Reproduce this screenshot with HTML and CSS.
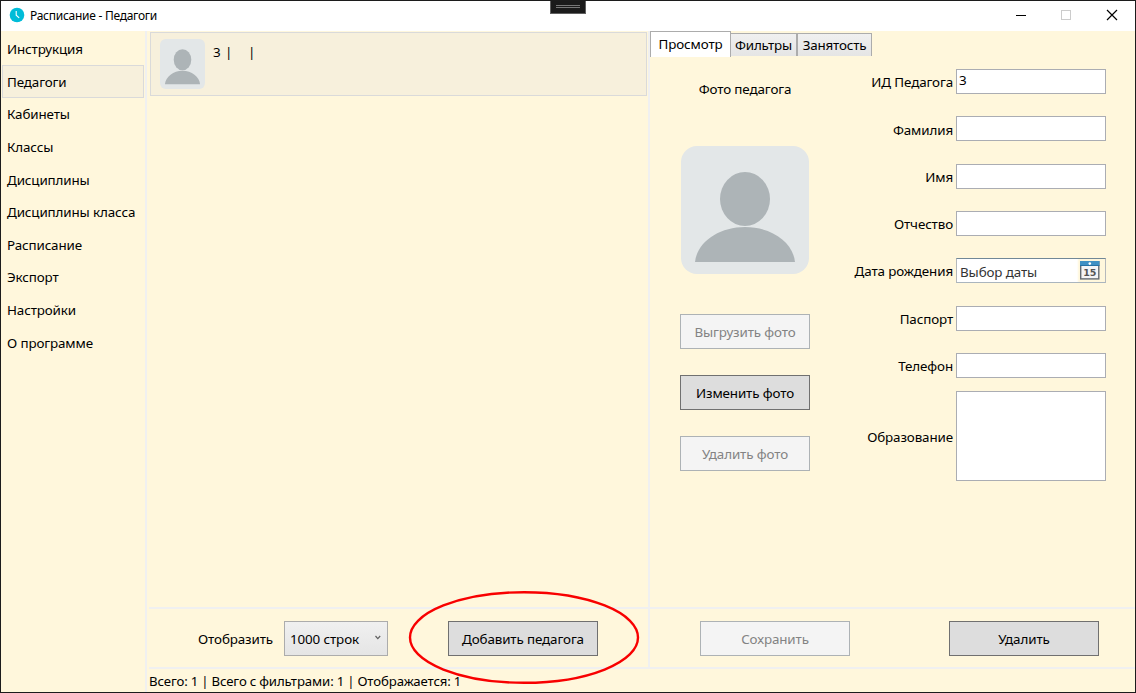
FILE: index.html
```html
<!DOCTYPE html>
<html lang="ru">
<head>
<meta charset="utf-8">
<title>Расписание - Педагоги</title>
<link rel="stylesheet" href="styles.css">
</head>
<body>
<div class="window">
  <header class="titlebar">
    <svg class="app-icon" width="16" height="16" viewBox="0 0 16 16"><circle cx="8" cy="8" r="7.3" fill="#00bcd8"/><path d="M7.2 4v4.2l3 2.6" fill="none" stroke="#fff" stroke-width="1.1"/></svg>
    <span class="title">Расписание - Педагоги</span>
    <svg class="caption-buttons" width="138" height="30" viewBox="0 0 138 30" shape-rendering="crispEdges">
      <path d="M18 14.5h10" stroke="#000"/>
      <rect x="63.5" y="9.5" width="9" height="9" fill="none" stroke="#ccc"/>
      <path d="M109 9l10 10M119 9l-10 10" stroke="#000" stroke-width="1.2" shape-rendering="auto"/>
    </svg>
  </header>
  <div class="content">
    <nav class="sidebar">
      <a class="nav-item">Инструкция</a>
      <a class="nav-item selected">Педагоги</a>
      <a class="nav-item">Кабинеты</a>
      <a class="nav-item">Классы</a>
      <a class="nav-item">Дисциплины</a>
      <a class="nav-item">Дисциплины класса</a>
      <a class="nav-item">Расписание</a>
      <a class="nav-item">Экспорт</a>
      <a class="nav-item">Настройки</a>
      <a class="nav-item">О программе</a>
    </nav>
    <main class="main">
      <div class="columns">
        <section class="list-column">
          <div class="list">
            <div class="card">
              <svg width="45" height="50" viewBox="0 0 128 128" preserveAspectRatio="none"><rect width="128" height="128" rx="16" fill="#e3e7e8"/><ellipse cx="64" cy="53" rx="25" ry="27" fill="#adb4b7"/><path d="M14 116C16 96 38 81 64 81s48 15 50 35z" fill="#adb4b7"/></svg>
              <div class="card-text"><span>3</span><span>|</span><span>|</span></div>
            </div>
          </div>
          <div class="actions">
            <span class="show-label">Отобразить</span>
            <div class="combo"><span>1000 строк</span><svg width="8" height="6" viewBox="0 0 8 6"><path d="M1.5 1l2.3 2.6L6.2 1" fill="none" stroke="#606060" stroke-width="1.2"/></svg></div>
            <button class="btn add">Добавить педагога</button>
          </div>
        </section>
        <section class="detail-column">
          <div class="detail">
            <div class="tabs">
              <div class="tab active">Просмотр</div>
              <div class="tab filters">Фильтры</div>
              <div class="tab busy">Занятость</div>
            </div>
            <div class="detail-body">
              <div class="photo">
                <span class="photo-label">Фото педагога</span>
                <svg class="portrait" width="128" height="128" viewBox="0 0 128 128"><rect width="128" height="128" rx="16" fill="#e3e7e8"/><ellipse cx="64" cy="53" rx="25" ry="27" fill="#adb4b7"/><path d="M14 116C16 96 38 81 64 81s48 15 50 35z" fill="#adb4b7"/></svg>
                <button class="btn" disabled>Выгрузить фото</button>
                <button class="btn">Изменить фото</button>
                <button class="btn" disabled>Удалить фото</button>
              </div>
              <div class="form">
                <label>ИД Педагога</label><div class="field"><span class="value">3</span></div>
                <label>Фамилия</label><div class="field"></div>
                <label>Имя</label><div class="field"></div>
                <label>Отчество</label><div class="field"></div>
                <label>Дата рождения</label>
                <div class="field date"><span>Выбор даты</span>
                  <svg width="20" height="19" viewBox="0 0 20 19"><rect x=".7" y=".7" width="18.1" height="17.2" fill="#f4f5f6" stroke="#626b73" stroke-width="1.4"/><path d="M0 0h19.5v4.5H0z" fill="#3f91c4"/><path d="M0 4h19.5v1H0z" fill="#2672a4"/><circle cx="9.8" cy="2.6" r="1.3" fill="#fff"/><text x="9.8" y="15" text-anchor="middle" class="day">15</text></svg>
                </div>
                <label>Паспорт</label><div class="field"></div>
                <label>Телефон</label><div class="field"></div>
                <label>Образование</label><div class="field education"></div>
              </div>
            </div>
          </div>
          <div class="actions save-row">
            <button class="btn" disabled>Сохранить</button>
            <button class="btn">Удалить</button>
          </div>
        </section>
      </div>
      <footer class="status">Всего: 1 | Всего с фильтрами: 1 | Отображается: 1</footer>
    </main>
  </div>
  <div class="debug-handle"></div>
  <svg class="highlight" width="232" height="96" viewBox="0 0 232 96"><ellipse cx="116" cy="47.5" rx="114" ry="45.3" fill="none" stroke="#f80000" stroke-width="2.4"/></svg>
</div>
</body>
</html>
```
FILE: styles.css
```css
* { box-sizing: border-box; }
body { margin: 0; font: 13.4px/19px "Noto Sans", "Open Sans", sans-serif; letter-spacing: -.12px; color: #000; }
.window { position: relative; width: 1136px; height: 693px; border: 1px solid #1c1c1c; background: #fff7dc; display: flex; flex-direction: column; overflow: hidden; }
.titlebar { height: 30px; flex: none; background: #fff; display: flex; align-items: center; padding-left: 8px; }
.app-icon { margin-top: -2px; }
.title { margin: -2px 0 0 5px; font-size: 12px; letter-spacing: -.27px; }
.caption-buttons { margin-left: auto; margin-right: -1px; }
.content { flex: 1; display: flex; min-height: 0; }
.sidebar { width: 146px; border-right: 2px solid #f0f0f0; padding: 1.5px 1px 0; }
.nav-item { display: flex; align-items: center; height: 32.6px; padding: 2px 0 0 4px; border: 1px solid transparent; white-space: nowrap; }
.nav-item.selected { background: #f7f0dc; border-color: #dadada; }
.main { flex: 1; display: flex; flex-direction: column; padding-left: 2px; }
.columns { flex: 1; display: flex; border-bottom: 2px solid #f0f0f0; }
.list-column { width: 501px; border-right: 2px solid #f0f0f0; display: flex; flex-direction: column; }
.list { flex: 1; padding: 1px 1px 0; }
.card { height: 64px; border: 1px solid #dadada; background: #f7f0dc; display: flex; padding: 6px 9px; }
.card-text { margin: 4px 0 0 8px; display: flex; }
.card-text span { width: 12px; }
.card-text span + span { width: 23px; }
.actions { height: 60px; flex: none; border-top: 2px solid #f0f0f0; display: flex; align-items: center; }
.show-label { margin-left: 49px; width: 86px; padding-top: 2px; }
.combo { width: 104px; height: 35px; border: 1px solid #acacac; background: linear-gradient(#f0f0f0, #e5e5e5); display: flex; align-items: center; justify-content: space-between; padding: 2px 5px 0; }
.combo svg { margin-top: -2px; }
.btn { width: 150px; height: 35px; padding: 2px 0 0; border: 1px solid #707070; background: #ddd; font: inherit; letter-spacing: inherit; color: #000; white-space: nowrap; }
.btn:disabled { border-color: #adb2b5; background: #f4f4f4; color: #838383; }
.add { margin-left: 60px; }
.detail-column { flex: 1; display: flex; flex-direction: column; }
.save-row { justify-content: space-between; padding: 0 36px 0 50px; }
.detail { flex: 1; }
.tabs { height: 27px; display: flex; align-items: flex-start; }
.tab { height: 23px; margin-top: 2px; border: 1px solid #acacac; border-bottom: 0; background: linear-gradient(#f0f0f0, #e5e5e5); display: flex; align-items: center; justify-content: center; white-space: nowrap; letter-spacing: -.18px; }
.tab.active { width: 81px; height: 26px; margin-top: 0; background: #fff; letter-spacing: -.12px; }
.filters { width: 66px; border-left: 0; }
.busy { width: 75px; }
.detail-body { display: flex; }
.photo { width: 130px; margin-left: 30px; padding-top: 22px; display: flex; flex-direction: column; align-items: center; }
.photo .btn { width: 130px; margin-bottom: 26px; }
.portrait { margin: 47px 1px 40px 0; flex: none; }
.form { margin: -.1px 0 0 30px; display: grid; grid-template-columns: 113px 150px; grid-template-rows: repeat(7, 47.3px) 94px; column-gap: 3px; align-items: center; }
.form label { padding-top: 2.5px; text-align: right; white-space: nowrap; }
.field { height: 25px; border: 1px solid #abadb3; background: #fff; }
.value { display: block; padding-left: 2px; line-height: 21px; }
.date { display: flex; align-items: center; justify-content: space-between; padding: 0 5px 0 3px; color: #333; background: linear-gradient(90deg, #fff 0 120px, #fff7dc 122px); border-color: #718897 #b5b9bc #aab5be #b5b9bc; }
.date span { padding-top: 3px; }
.date svg { margin-top: -1px; }
.day { font: bold 9.5px "DejaVu Sans", sans-serif; fill: #555; }
.education { height: 90px; }
.status { height: 23px; flex: none; line-height: 24px; white-space: nowrap; letter-spacing: -.1px; word-spacing: -.25px; font-size: 13.2px; }
.debug-handle { position: absolute; left: 549px; top: -1px; width: 36px; height: 14px; border: 1px solid #606060; background: linear-gradient(#777, #777) 5px 4px / 24px 1px no-repeat, linear-gradient(#777, #777) 5px 6px / 24px 1px no-repeat, #1b1b1b; }
.highlight { position: absolute; left: 407px; top: 589px; pointer-events: none; }
```
